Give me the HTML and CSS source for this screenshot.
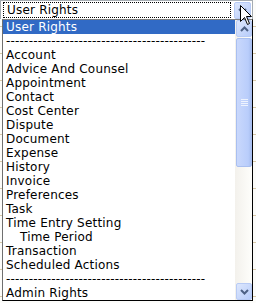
FILE: index.html
```html
<!DOCTYPE html>
<html lang="en">

<head>
    <meta charset="UTF-8">
    <title>User Rights</title>
    <link rel="stylesheet" href="styles.css">
</head>

<body>
    <div class="page">
        <!-- closed select on top -->
        <div class="select">
            <div class="select-value"><span class="focus">User Rights</span></div>
            <div class="select-btn">
                <svg width="9" height="6" viewBox="0 0 9 6"><polyline points="1,1 4.5,4.5 8,1" fill="none" stroke="#4d6185" stroke-width="2"/></svg>
            </div>
        </div>

        <!-- open list -->
        <div class="list">
            <ul class="options">
                <li class="selected">User Rights</li>
                <li>--------------------------------------------</li>
                <li>Account</li>
                <li>Advice And Counsel</li>
                <li>Appointment</li>
                <li>Contact</li>
                <li>Cost Center</li>
                <li>Dispute</li>
                <li>Document</li>
                <li>Expense</li>
                <li>History</li>
                <li>Invoice</li>
                <li>Preferences</li>
                <li>Task</li>
                <li>Time Entry Setting</li>
                <li class="indent">Time Period</li>
                <li>Transaction</li>
                <li>Scheduled Actions</li>
                <li>--------------------------------------------</li>
                <li>Admin Rights</li>
            </ul>
            <div class="scrollbar">
                <div class="arrow">
                    <svg width="9" height="6" viewBox="0 0 9 6"><polyline points="1,5 4.5,1.5 8,5" fill="none" stroke="#4d6185" stroke-width="2"/></svg>
                </div>
                <div class="thumb">
                    <div class="grip"></div>
                </div>
                <div class="track"></div>
                <div class="arrow">
                    <svg width="9" height="6" viewBox="0 0 9 6"><polyline points="1,1 4.5,4.5 8,1" fill="none" stroke="#4d6185" stroke-width="2"/></svg>
                </div>
            </div>
        </div>

        <!-- mouse pointer -->
        <svg class="cursor" width="13" height="21" viewBox="0 0 13 21">
            <path d="M0.5,0.5 L0.5,16.5 L4.5,12.5 L7.5,19.5 L9.5,18.5 L6.5,11.5 L11.5,11.5 Z" fill="#fff" stroke="#000" stroke-width="1"/>
        </svg>
    </div>
</body>

</html>
```

FILE: styles.css
```css
body {
    margin: 0;
    background-color: #fff;
    font-family: "DejaVu Sans", Verdana, sans-serif;
    font-size: 12px;
    letter-spacing: 0.2px;
    color: #000;
}

.page {
    position: relative;
    width: 256px;
    height: 303px;
    overflow: hidden;
    background: #fcfcfa;
    /* table lines of the page behind the popup */
    background-image: repeating-linear-gradient(to bottom, transparent 0, transparent 26px, #d8c9a8 26px, #d8c9a8 27px);
}

/* closed select */
.select {
    display: flex;
    width: 251px;
    height: 18px;
    border: 1px solid #a5acb2;
    border-bottom: none;
    background: #fff;
}

.select-value {
    flex: 1;
    padding: 1px 2px;
}

.focus {
    display: block;
    height: 14px;
    line-height: 14px;
    padding-left: 3px;
    border: 1px dotted #000;
}

.select-btn {
    width: 15px;
    height: 15px;
    margin: 1px;
    border: 1px solid #b8cbf5;
    border-radius: 2px;
    background: linear-gradient(to bottom right, #dde7fd, #b7ccfa);
    display: flex;
    align-items: center;
    justify-content: center;
}

/* popup list */
.list {
    display: flex;
    margin-left: 2px;
    width: 249px;
    height: 280px;
    border: 1px solid #000;
    border-top-color: #7f7f7f;
    border-left-color: #6f6f6f;
    background: #fff;
}

.options {
    flex: 1;
    list-style: none;
    margin: 0;
    padding: 0;
    overflow: hidden;
}

.options li {
    height: 14px;
    line-height: 14px;
    padding-left: 3px;
    white-space: nowrap;
}

.options li.selected {
    background-color: #316ac5;
    color: #fff;
}

.options li.indent {
    padding-left: 17px;
}

/* xp style scrollbar */
.scrollbar {
    width: 17px;
    display: flex;
    flex-direction: column;
    background: linear-gradient(to right, #f3f1ec, #fefefb);
}

.arrow {
    height: 15px;
    margin: 0 0 0 1px;
    border: 1px solid #b8cbf5;
    border-radius: 2px;
    background: linear-gradient(to bottom right, #dde7fd, #b7ccfa);
    display: flex;
    align-items: center;
    justify-content: center;
}

.thumb {
    height: 127px;
    margin: 1px 0 0 1px;
    border: 1px solid #a9bff0;
    border-radius: 2px;
    background: linear-gradient(to right, #c9d8fc, #b9cdfb 80%, #a9bff0);
    display: flex;
    align-items: center;
    justify-content: center;
}

.grip {
    width: 7px;
    height: 7px;
    background: repeating-linear-gradient(to bottom, #eef3fe 0, #eef3fe 1px, transparent 1px, transparent 2px);
}

.track {
    flex: 1;
}

.cursor {
    position: absolute;
    left: 240px;
    top: 5px;
}
```
